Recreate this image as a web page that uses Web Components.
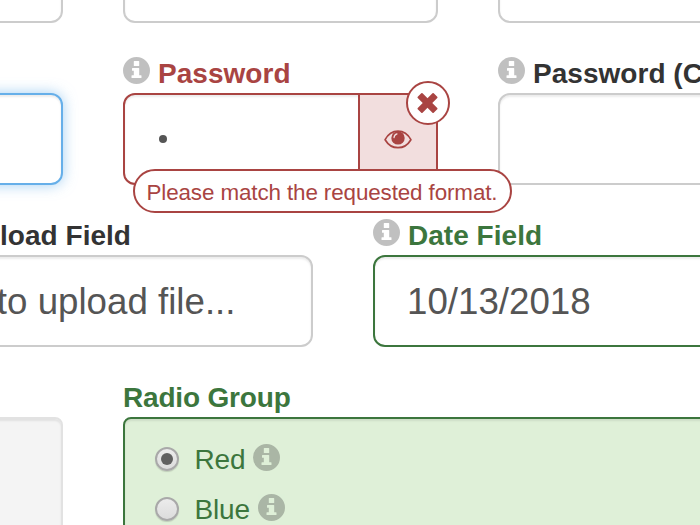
<!DOCTYPE html>
<html lang="en">
<head>
<meta charset="utf-8">
<title>Form</title>
<style>
html,body{margin:0;height:525px;overflow:hidden;background:#fff}
body{font-family:"Liberation Sans",Arial,sans-serif;color:#333}
</style>
</head>
<body>
<form-page></form-page>
<script>
const define = (name, html, setup) => customElements.define(name, class extends HTMLElement {
  constructor() {
    super();
    const t = document.createElement('template');
    t.innerHTML = html;
    this.attachShadow({ mode: 'open' }).append(t.content.cloneNode(true));
  }
  connectedCallback() { if (setup) setup(this, this.shadowRoot); }
});

define('info-icon', `
<style>:host{display:block;flex:none;width:27px;height:27px;color:#333;opacity:.3}svg{display:block;width:100%;height:100%}</style>
<svg viewBox="0 0 27 27" fill="currentColor" fill-rule="evenodd"><path d="M13.5 0a13.5 13.5 0 1 1 0 27a13.5 13.5 0 1 1 0-27ZM11.3 4.1h4.4q.5 0 .5.5v4q0 .5-.5.5h-4.4q-.5 0-.5-.5v-4q0-.5.5-.5ZM9.5 11.1h6.2q.5 0 .5.5v6.7h1.8q.5 0 .5.5v1.8q0 .5-.5.5h-9q-.5 0-.5-.5v-1.8q0-.5.5-.5h1.8v-4.6h-1.3q-.5 0-.5-.5v-1.6q0-.5.5-.5Z"/></svg>`);

define('eye-icon', `
<style>:host{display:block;width:28px;height:19px}svg{display:block}</style>
<svg width="28" height="19" viewBox="0 0 28 19"><path d="M1.1 9.7C4.2 4 8.8 1.2 14 1.2S23.8 4 26.9 9.7C23.8 15 19.2 17.7 14 17.7S4.2 15 1.1 9.7Z" fill="none" stroke="currentColor" stroke-width="1.7" stroke-linejoin="round"/><circle cx="14" cy="7.9" r="6.7" fill="currentColor"/><path d="M10 7.6Q10.2 4.6 13 3.8" fill="none" stroke="#f2dede" stroke-width="1.2" stroke-linecap="round"/></svg>`);

define('close-badge', `
<style>:host{box-sizing:border-box;width:44px;height:44px;border:2px solid #a94442;border-radius:50%;background:#fff;color:#a94442;display:flex;align-items:center;justify-content:center}svg{display:block}</style>
<svg width="22" height="22" viewBox="-11 -11 22 22" fill="currentColor"><g transform="translate(-.5 0) rotate(45)"><rect x="-11.3" y="-3.4" width="22.6" height="6.8" rx=".9"/><rect x="-3.4" y="-11.3" width="6.8" height="22.6" rx=".9"/></g></svg>`);

define('error-tip', `
<style>:host{box-sizing:border-box;width:379px;height:44px;border:2px solid #a94442;border-radius:22px;background:#fff;color:#a94442;font-size:22.4px;letter-spacing:-.11px;line-height:43px;padding-left:11.5px;white-space:nowrap}</style><slot></slot>`);

define('form-row', `
<style>:host{display:flex;gap:60px;height:162px;margin-left:-252px}</style><slot></slot>`);

define('form-field', `
<style>
:host{display:flex;flex-direction:column;flex:none;width:315px;position:relative;--line:#ccc}
:host([wide]){width:565px}:host([group]){width:690px}
:host([state=error]){--line:#a94442;color:#a94442;z-index:2}
:host([state=success]){--line:#3c763d;color:#3c763d}
:host([state=focus]){--line:#66afe9}
header{display:flex;flex:none;gap:8px;height:41px;align-items:flex-start;white-space:nowrap}
info-icon{margin-top:5px}
header span{font-size:28px;font-weight:bold;line-height:32px;padding-top:6px;letter-spacing:.03px}
.box{box-sizing:border-box;flex:none;height:92px;border:2px solid var(--line);border-radius:12px;background:#fff;box-shadow:inset 0 2px 2px rgba(0,0,0,.075);display:flex;align-items:center;overflow:hidden;color:#555;font-size:36.7px;white-space:nowrap}
.value{flex:1;padding:2px 32px 0}
:host([end]) header{padding-right:182px;justify-content:flex-end}
:host([end]) .value{text-align:right;padding-right:75.5px}
:host([state=focus]) .box{box-shadow:inset 0 2px 2px rgba(0,0,0,.075),0 0 14px rgba(102,175,233,.6)}
:host([state=disabled]) .box{height:130px;background:#f4f4f4;border-color:#e2e2e2;border-radius:8px}
:host([group]) .box{height:180px;background:#dff0d8;border-radius:8px;display:block;color:inherit;font-size:28px;padding:15px 30px}
:host([group]) header span{letter-spacing:-.18px}
:host([group]) .value{padding:0}
::slotted(close-badge){position:absolute;right:-12px;top:29px}
::slotted(error-tip){position:absolute;left:10px;top:117px}
</style>
<header><info-icon></info-icon><span></span></header>
<div class="box"><div class="value"><slot></slot></div><slot name="addon"></slot></div>
<slot name="overlay"></slot>`, (host, root) => {
  root.querySelector('span').textContent = host.getAttribute('label') || '';
  if (!host.hasAttribute('info')) root.querySelector('info-icon').remove();
});

define('field-addon', `
<style>:host{box-sizing:border-box;width:78px;height:88px;border-left:2px solid #a94442;background:#f2dede;color:#a94442;display:flex;align-items:center;justify-content:center;padding:1px 1px 0 0}</style><eye-icon></eye-icon>`);

define('password-dot', `<style>:host{display:block;width:8.6px;height:8.6px;border-radius:50%;background:#555;margin-left:1.7px;margin-top:-2px}</style>`);

define('radio-option', `
<style>
:host{display:flex;height:50px;align-items:flex-start}
i{box-sizing:border-box;flex:none;width:24px;height:24px;margin:13px 15.5px 0 0;border:2px solid #a9a9a9;border-radius:50%;background:linear-gradient(#ececec,#dcdcdc);box-shadow:0 1px 1px rgba(0,0,0,.15);display:flex;align-items:center;justify-content:center}
:host([checked]) i::after{content:"";width:12px;height:12px;border-radius:50%;background:#606060}
span{line-height:32px;padding-top:10px;letter-spacing:-.15px}
info-icon{margin:10px 0 0 8px}
</style>
<i></i><span><slot></slot></span><info-icon></info-icon>`);

define('form-page', `
<style>:host{display:block;width:700px;height:525px;overflow:hidden}
main{margin-top:-110px;display:flow-root}</style>
<main>
<form-row><form-field></form-field><form-field></form-field><form-field></form-field></form-row>
<form-row>
<form-field state="focus"></form-field>
<form-field state="error" info label="Password"><password-dot></password-dot><field-addon slot="addon"></field-addon><close-badge slot="overlay"></close-badge><error-tip slot="overlay">Please match the requested format.</error-tip></form-field>
<form-field info label="Password (Confirm)"></form-field>
</form-row>
<form-row>
<form-field wide end label="Upload Field">Click to upload file...</form-field>
<form-field wide state="success" info label="Date Field">10/13/2018</form-field>
</form-row>
<form-row>
<form-field state="disabled"></form-field>
<form-field group state="success" label="Radio Group"><radio-option checked>Red</radio-option><radio-option>Blue</radio-option></form-field>
</form-row>
</main>`);
</script>
</body>
</html>
